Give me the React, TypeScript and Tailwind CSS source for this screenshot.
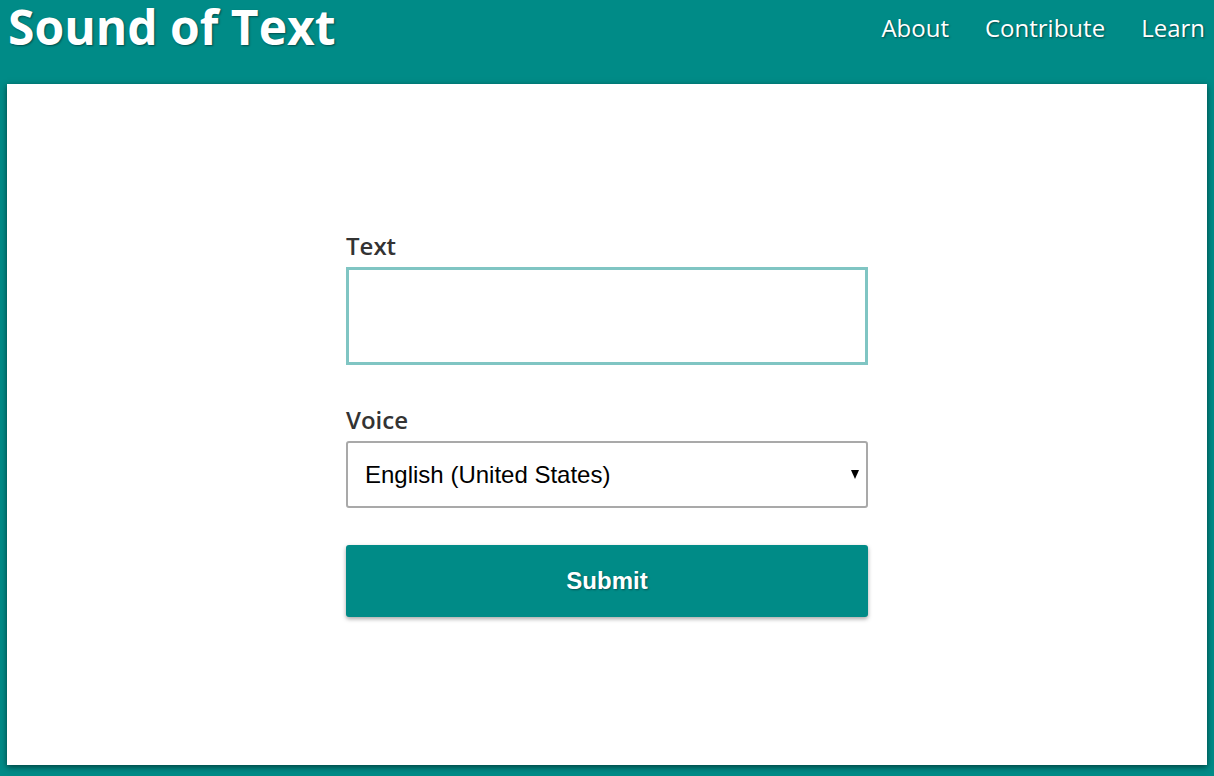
import React from "react";

export default function App() {
  return (
    <div
      className="min-h-[776px] w-full bg-[#008b87] px-[7px] pb-[11px]"
      style={{ fontFamily: '"Open Sans", sans-serif' }}
    >
      <header className="flex h-[84px] items-start justify-between">
        <h1 className="pl-[1px] text-[48px] font-bold leading-[54px] text-white [text-shadow:1px_1px_2px_rgba(0,0,0,0.45)]">
          Sound of Text
        </h1>
        <nav className="flex gap-[36px] pt-[12px] pr-[2px] text-[24px] leading-[32px] text-white [text-shadow:1px_1px_2px_rgba(0,0,0,0.45)]">
          <a href="#">About</a>
          <a href="#">Contribute</a>
          <a href="#">Learn</a>
        </nav>
      </header>
      <main className="h-[681px] bg-white pt-[147px] shadow-[0_2px_6px_rgba(0,0,0,0.55)]">
        <form className="mx-auto w-[522px]" onSubmit={(e) => e.preventDefault()}>
          <label className="block text-[24px] font-semibold leading-[30px] text-[#333333]">
            Text
          </label>
          <textarea className="mt-[6px] block h-[98px] w-full resize-none border-[3px] border-[#80c5c3] bg-white outline-none" />
          <label className="mt-[40px] block text-[24px] font-semibold leading-[30px] text-[#333333]">
            Voice
          </label>
          <div className="relative mt-[6px]">
            <select
              className="block h-[67px] w-full appearance-none rounded-[3px] border-2 border-[#a9a9a9] bg-white pl-[17px] text-[24px] text-black outline-none"
              style={{ fontFamily: '"Liberation Sans", Arial, sans-serif' }}
              defaultValue="en-US"
            >
              <option value="en-US">English (United States)</option>
            </select>
            <span className="pointer-events-none absolute right-[9px] top-[29px] block h-0 w-0 border-x-[4px] border-t-[9px] border-x-transparent border-t-black" />
          </div>
          <button
            type="submit"
            className="mt-[37px] block h-[72px] w-full rounded-[3px] bg-[#008b87] text-[24px] font-bold text-white shadow-[0_2px_4px_rgba(0,0,0,0.35)] [text-shadow:1px_1px_2px_rgba(0,0,0,0.4)]"
            style={{ fontFamily: '"Liberation Sans", Arial, sans-serif' }}
          >
            Submit
          </button>
        </form>
      </main>
    </div>
  );
}
